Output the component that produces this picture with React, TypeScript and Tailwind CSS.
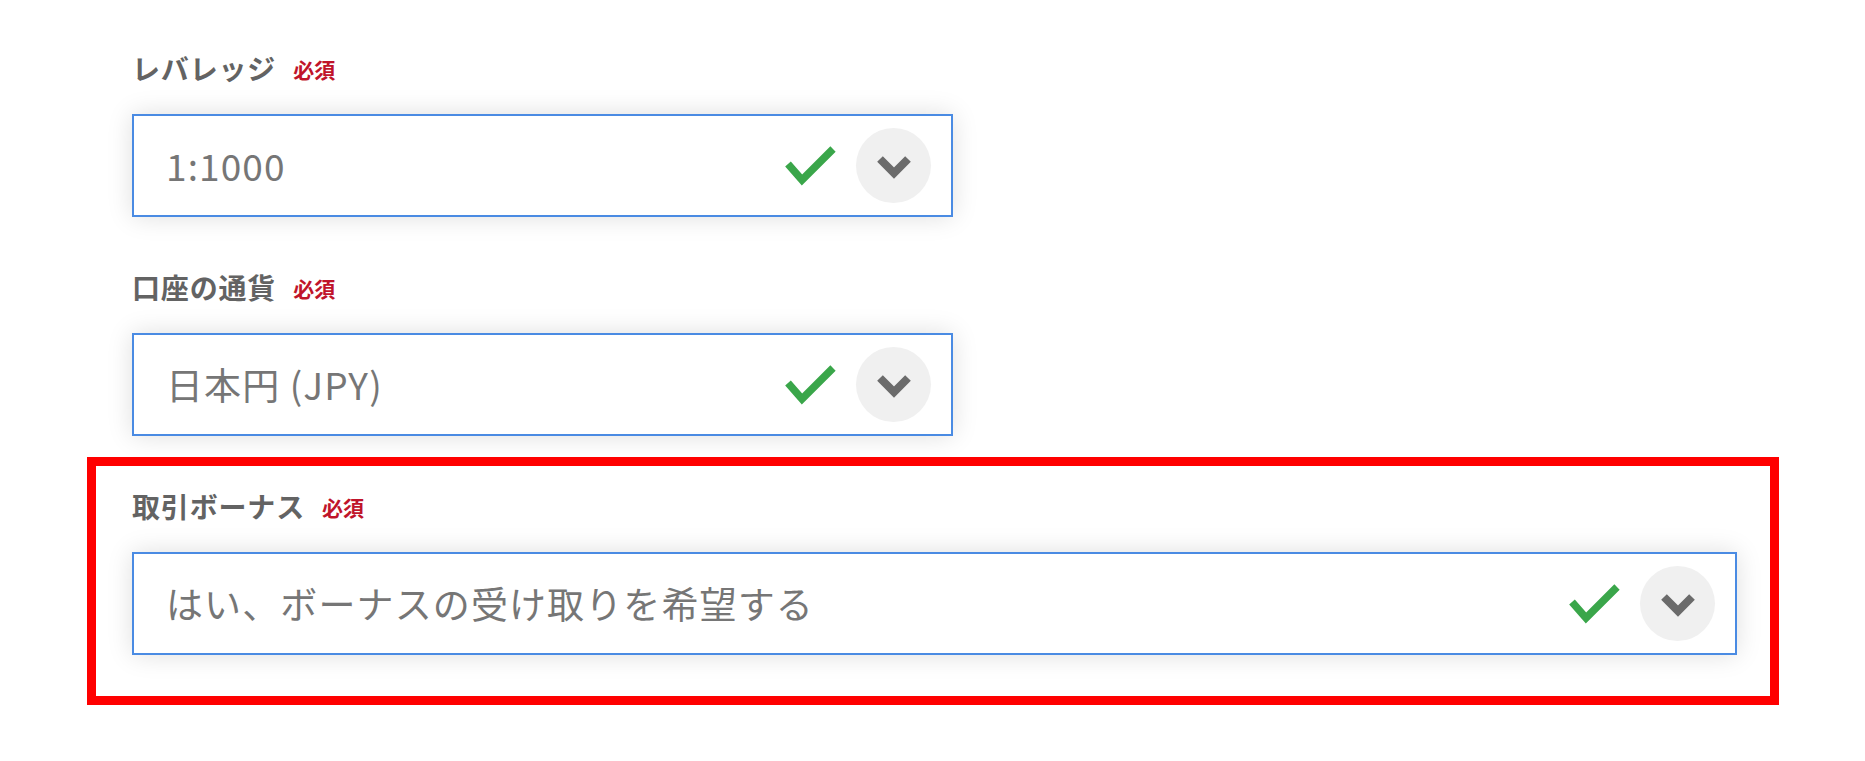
import React from 'react';

const font = { fontFamily: '"Noto Sans CJK JP", "Noto Sans", sans-serif' };

function CheckIcon() {
  return (
    <svg width="53" height="42" viewBox="0 0 53 42" className="mr-[19px] shrink-0">
      <polyline points="4,19 18,35 49,4" fill="none" stroke="#3aa64a" strokeWidth="7.5" strokeLinejoin="miter" />
    </svg>
  );
}

function ChevronCircle() {
  return (
    <div className="w-[75px] h-[75px] rounded-full bg-[#f0f0f0] flex items-center justify-center shrink-0">
      <svg width="40" height="30" viewBox="0 0 40 30">
        <polyline points="6,8 20,22 34,8" fill="none" stroke="#6b6b6b" strokeWidth="8" strokeLinejoin="miter" />
      </svg>
    </div>
  );
}

interface FieldProps {
  label: string;
  value: string;
  width: string;
}

function Field({ label, value, width }: FieldProps) {
  return (
    <div className={width}>
      <div className="h-[40px] flex items-center gap-[17px]">
        <span className="text-[28px] font-bold text-[#636363] tracking-[0.03em]">{label}</span>
        <span className="text-[21px] font-bold text-[#c0142a] pt-[4px]">必須</span>
      </div>
      <div className="mt-[26px] h-[103px] border-2 border-[#4a8be3] bg-white shadow-[0_0_24px_rgba(0,0,0,0.13)] flex items-center pl-[32px] pr-[20px]">
        <span className="flex-1 text-[37px] text-[#767676] tracking-[0.03em]">{value}</span>
        <CheckIcon />
        <ChevronCircle />
      </div>
    </div>
  );
}

export default function App() {
  return (
    <div className="w-[1865px] h-[761px] bg-white overflow-hidden pt-[48px]" style={font}>
      <div className="ml-[132px]">
        <Field label="レバレッジ" value="1:1000" width="w-[821px]" />
      </div>
      <div className="ml-[132px] mt-[50px]">
        <Field label="口座の通貨" value="日本円 (JPY)" width="w-[821px]" />
      </div>
      <div className="ml-[87px] mt-[21px] w-[1692px] border-[9px] border-[#ff0000] pl-[36px] pr-[33px] pt-[20px] pb-[41px]">
        <Field label="取引ボーナス" value="はい、ボーナスの受け取りを希望する" width="w-full" />
      </div>
    </div>
  );
}
